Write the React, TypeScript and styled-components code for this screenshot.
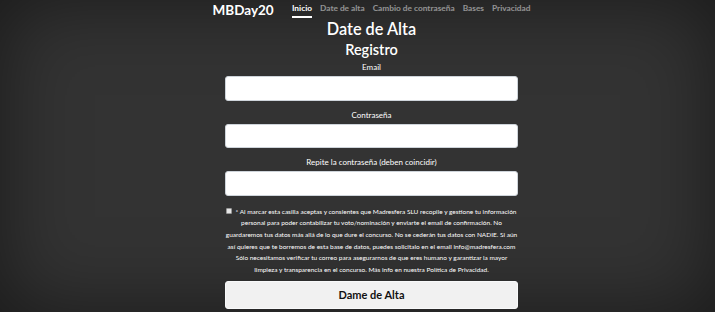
import React from "react";
import styled, { createGlobalStyle } from "styled-components";

const Global = createGlobalStyle`
  html, body { margin: 0; padding: 0; height: 100%; }
  body {
    background: #333;
    color: #fff;
    font-family: "Lato", "Open Sans", sans-serif;
    box-shadow: inset 0 0 5rem rgba(0,0,0,.5);
    min-height: 312px;
    overflow: hidden;
  }
  #root { height: 100%; }
`;

const Page = styled.div`
  display: flex;
  justify-content: center;
  padding-left: 28px;
  height: 312px;
  box-sizing: border-box;
`;

const Column = styled.div`
  width: 318px;
  display: flex;
  flex-direction: column;
  align-items: center;
`;

const Masthead = styled.header`
  width: 100%;
  display: flex;
  align-items: flex-start;
  justify-content: space-between;
  padding-top: 2px;
`;

const Brand = styled.h3`
  margin: 0;
  font-size: 13.5px;
  font-weight: 700;
  line-height: 17px;
`;

const Nav = styled.nav`
  display: flex;
  gap: 8px;
  padding-top: 1px;
`;

const NavLink = styled.a<{ $active?: boolean }>`
  font-size: 8.3px;
  font-weight: 700;
  line-height: 11px;
  color: ${(p) => (p.$active ? "#fff" : "rgba(255,255,255,.5)")};
  border-bottom: 2px solid ${(p) => (p.$active ? "#fff" : "transparent")};
  padding-bottom: 2px;
  text-decoration: none;
`;

const Title = styled.h1`
  margin: 0;
  font-size: 16.3px;
  font-weight: 600;
  line-height: 20px;
`;

const Subtitle = styled.h2`
  margin: 0;
  font-size: 14.5px;
  font-weight: 600;
  line-height: 19px;
  margin-top: 1px;
`;

const Form = styled.form`
  width: 293px;
  display: flex;
  flex-direction: column;
  align-items: stretch;
  margin-top: 3px;
`;

const Field = styled.div`
  display: flex;
  flex-direction: column;
  align-items: center;
  margin-bottom: 9px;
`;

const Label = styled.label`
  font-size: 8px;
  line-height: 11px;
  margin-bottom: 3px;
`;

const Input = styled.input`
  width: 100%;
  box-sizing: border-box;
  height: 24.5px;
  border: 1px solid #ced4da;
  border-radius: 3px;
  background: #fff;
  margin: 0;
`;

const Consent = styled.p`
  margin: 1px 0 0;
  font-size: 6.5px;
  line-height: 11.7px;
  text-align: center;
  white-space: nowrap;
`;

const Check = styled.input`
  appearance: none;
  width: 6px;
  height: 6px;
  margin: 0 3px 0 0;
  vertical-align: -0.5px;
  background: #e6e6e6;
  border: 1px solid #999;
  border-radius: 1px;
  box-sizing: border-box;
`;

const Button = styled.button`
  margin-top: 5px;
  height: 28px;
  border: 1px solid #f8f9fa;
  border-radius: 3px;
  background: #f1f1f1;
  color: #111;
  font-family: "Lato", "Open Sans", sans-serif;
  font-size: 11px;
  font-weight: 700;
`;

export default function App() {
  return (
    <>
      <Global />
      <Page>
        <Column>
          <Masthead>
            <Brand>MBDay20</Brand>
            <Nav>
              <NavLink $active>Inicio</NavLink>
              <NavLink>Date de alta</NavLink>
              <NavLink>Cambio de contraseña</NavLink>
              <NavLink>Bases</NavLink>
              <NavLink>Privacidad</NavLink>
            </Nav>
          </Masthead>
          <Title>Date de Alta</Title>
          <Subtitle>Registro</Subtitle>
          <Form onSubmit={(e) => e.preventDefault()}>
            <Field>
              <Label>Email</Label>
              <Input type="email" />
            </Field>
            <Field>
              <Label>Contraseña</Label>
              <Input type="password" />
            </Field>
            <Field>
              <Label>Repite la contraseña (deben coincidir)</Label>
              <Input type="password" />
            </Field>
            <Consent>
              <Check type="checkbox" />* Al marcar esta casilla aceptas y consientes que Madresfera SLU recopile y gestione tu información
              <br />
              personal para poder contabilizar tu voto/nominación y enviarte el email de confirmación. No
              <br />
              guardaremos tus datos más allá de lo que dure el concurso. No se cederán tus datos con NADIE. Si aún
              <br />
              así quieres que te borremos de esta base de datos, puedes solicitalo en el email info@madresfera.com
              <br />
              Sólo necesitamos verificar tu correo para asegurarnos de que eres humano y garantizar la mayor
              <br />
              limpieza y transparencia en el concurso. Más info en nuestra Política de Privacidad.
            </Consent>
            <Button type="submit">Dame de Alta</Button>
          </Form>
        </Column>
      </Page>
    </>
  );
}
